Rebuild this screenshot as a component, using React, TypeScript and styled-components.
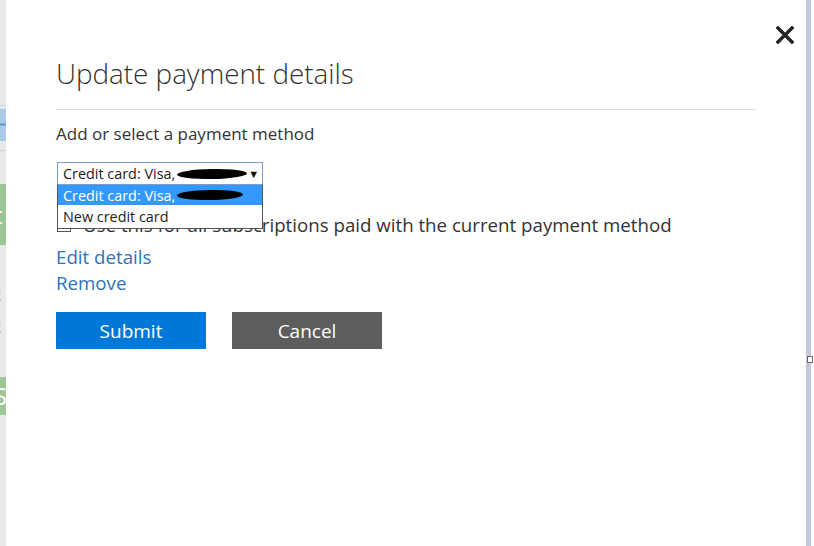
import React from "react"
import styled, { createGlobalStyle } from "styled-components"

const GlobalStyle = createGlobalStyle`
  html, body {
    margin: 0;
    padding: 0;
    background: #ffffff;
    overflow: hidden;
  }
  body {
    font-family: "Segoe UI", "Open Sans", "Noto Sans", sans-serif;
    color: #333333;
  }
`

const Page = styled.div`
  display: flex;
  width: 814px;
  height: 546px;
`

// the page behind the dialog, only a sliver of it shows
const Backdrop = styled.div`
  width: 6px;
  flex-shrink: 0;
  background: #e9e9e9;
  display: flex;
  flex-direction: column;
  overflow: hidden;
`

const BackLine = styled.div<{ top: number }>`
  margin-top: ${(p) => p.top}px;
  height: 1px;
  background: #c6d3e2;
`

const BackTab = styled.div<{ top: number }>`
  margin-top: ${(p) => p.top}px;
  height: 32px;
  background: #a9c9e8;
  color: #5b8fc6;
  font-size: 20px;
  line-height: 32px;
  text-indent: -4px;
`

const BackBlock = styled.div<{ top: number; h: number }>`
  margin-top: ${(p) => p.top}px;
  height: ${(p) => p.h}px;
  background: #9bc796;
  color: #ffffff;
  font-size: 24px;
  line-height: ${(p) => p.h}px;
  text-indent: -6px;
`

const BackText = styled.div<{ top: number }>`
  margin-top: ${(p) => p.top}px;
  height: 20px;
  color: #8a8a8a;
  font-size: 17px;
  line-height: 20px;
  text-indent: -7px;
`

const Dialog = styled.div`
  position: relative;
  flex: 1;
  background: #ffffff;
  padding: 54px 0 0 50px;
  box-sizing: border-box;
`

const DialogEdge = styled.div`
  width: 5px;
  flex-shrink: 0;
  background: #c3c9d9;
  position: relative;
`

const EdgeHandle = styled.div`
  position: absolute;
  left: 1px;
  top: 356px;
  width: 4px;
  height: 5px;
  border: 1px solid #6a6a6a;
  background: #ffffff;
`

const Gutter = styled.div`
  width: 3px;
  flex-shrink: 0;
  background: #ffffff;
`

const CloseButton = styled.div`
  position: absolute;
  top: 23px;
  right: 9px;
  width: 24px;
  height: 24px;
  display: flex;
  align-items: center;
  justify-content: center;
`

const Title = styled.h1`
  margin: 0;
  font-size: 27.8px;
  line-height: 38px;
  font-weight: 300;
  color: #333333;
`

const Rule = styled.div`
  width: 700px;
  height: 1px;
  background: #dedede;
  margin-top: 17px;
`

const Label = styled.div`
  margin-top: 12px;
  font-size: 17px;
  line-height: 24px;
  color: #333333;
`

const SelectWrap = styled.div`
  position: relative;
  margin-top: 16px;
  margin-left: 1px;
  width: 206px;
`

const SelectBox = styled.div`
  height: 23px;
  box-sizing: border-box;
  border: 1px solid #7b9ad0;
  display: flex;
  align-items: center;
  padding: 0 3px 0 5px;
  font-size: 14.4px;
  color: #222222;
  white-space: nowrap;
  overflow: hidden;
`

const Arrow = styled.span`
  margin-left: 1px;
  font-size: 11px;
  color: #111111;
`

const Redacted = styled.span<{ w: number }>`
  display: inline-block;
  flex-shrink: 0;
  width: ${(p) => p.w}px;
  height: 10px;
  margin-left: 2px;
  background: #000000;
  border-radius: 50%;
  transform: rotate(-1deg);
`

const OptionList = styled.div`
  position: absolute;
  left: 0;
  top: 23px;
  width: 206px;
  box-sizing: border-box;
  border: 1px solid #555555;
  border-top: none;
  background: #ffffff;
  z-index: 2;
`

const Option = styled.div<{ selected?: boolean }>`
  height: ${(p) => (p.selected ? 20 : 23)}px;
  display: flex;
  align-items: center;
  padding-left: 5px;
  font-size: 14.4px;
  white-space: nowrap;
  background: ${(p) => (p.selected ? "#3399ff" : "#ffffff")};
  color: ${(p) => (p.selected ? "#ffffff" : "#222222")};
`

const CheckRow = styled.label`
  margin-top: 27px;
  display: flex;
  align-items: center;
  gap: 12px;
  font-size: 18.7px;
  line-height: 26px;
  color: #333333;
`

const Checkbox = styled.span`
  width: 14px;
  height: 14px;
  border: 1px solid #555555;
  box-sizing: border-box;
  margin-left: 1px;
`

const LinkItem = styled.a<{ first?: boolean }>`
  display: block;
  margin-top: ${(p) => (p.first ? 6 : 0)}px;
  font-size: 18.7px;
  line-height: 26px;
  color: #2e72b8;
  text-decoration: none;
`

const Buttons = styled.div`
  display: flex;
  gap: 26px;
  margin-top: 16px;
`

const Button = styled.button<{ primary?: boolean }>`
  width: 150px;
  height: 37px;
  border: none;
  font-family: inherit;
  font-size: 19px;
  color: #ffffff;
  background: ${(p) => (p.primary ? "#0078d7" : "#5d5d5d")};
  padding: 0;
`

export default function App() {
  return (
    <>
      <GlobalStyle />
      <Page>
        <Backdrop>
          <BackLine top={105} />
          <BackTab top={3}>H</BackTab>
          <BackLine top={9} />
          <BackBlock top={33} h={61}>t</BackBlock>
          <BackText top={40}>c</BackText>
          <BackText top={12}>c</BackText>
          <BackBlock top={40} h={38}>S</BackBlock>
        </Backdrop>
        <Dialog>
          <CloseButton>
            <svg width="18" height="18" viewBox="0 0 18 18">
              <path d="M2 2 L16 16 M16 2 L2 16" stroke="#222" strokeWidth="3.4" strokeLinecap="square" />
            </svg>
          </CloseButton>
          <Title>Update payment details</Title>
          <Rule />
          <Label>Add or select a payment method</Label>
          <SelectWrap>
            <SelectBox>
              <span>Credit card: Visa,</span>
              <Redacted w={70} />
              <Arrow>▼</Arrow>
            </SelectBox>
            <OptionList>
              <Option selected>
                <span>Credit card: Visa,</span>
                <Redacted w={66} />
              </Option>
              <Option>New credit card</Option>
            </OptionList>
          </SelectWrap>
          <CheckRow>
            <Checkbox />
            Use this for all subscriptions paid with the current payment method
          </CheckRow>
          <LinkItem first>Edit details</LinkItem>
          <LinkItem>Remove</LinkItem>
          <Buttons>
            <Button primary>Submit</Button>
            <Button>Cancel</Button>
          </Buttons>
        </Dialog>
        <DialogEdge>
          <EdgeHandle />
        </DialogEdge>
        <Gutter />
      </Page>
    </>
  )
}
